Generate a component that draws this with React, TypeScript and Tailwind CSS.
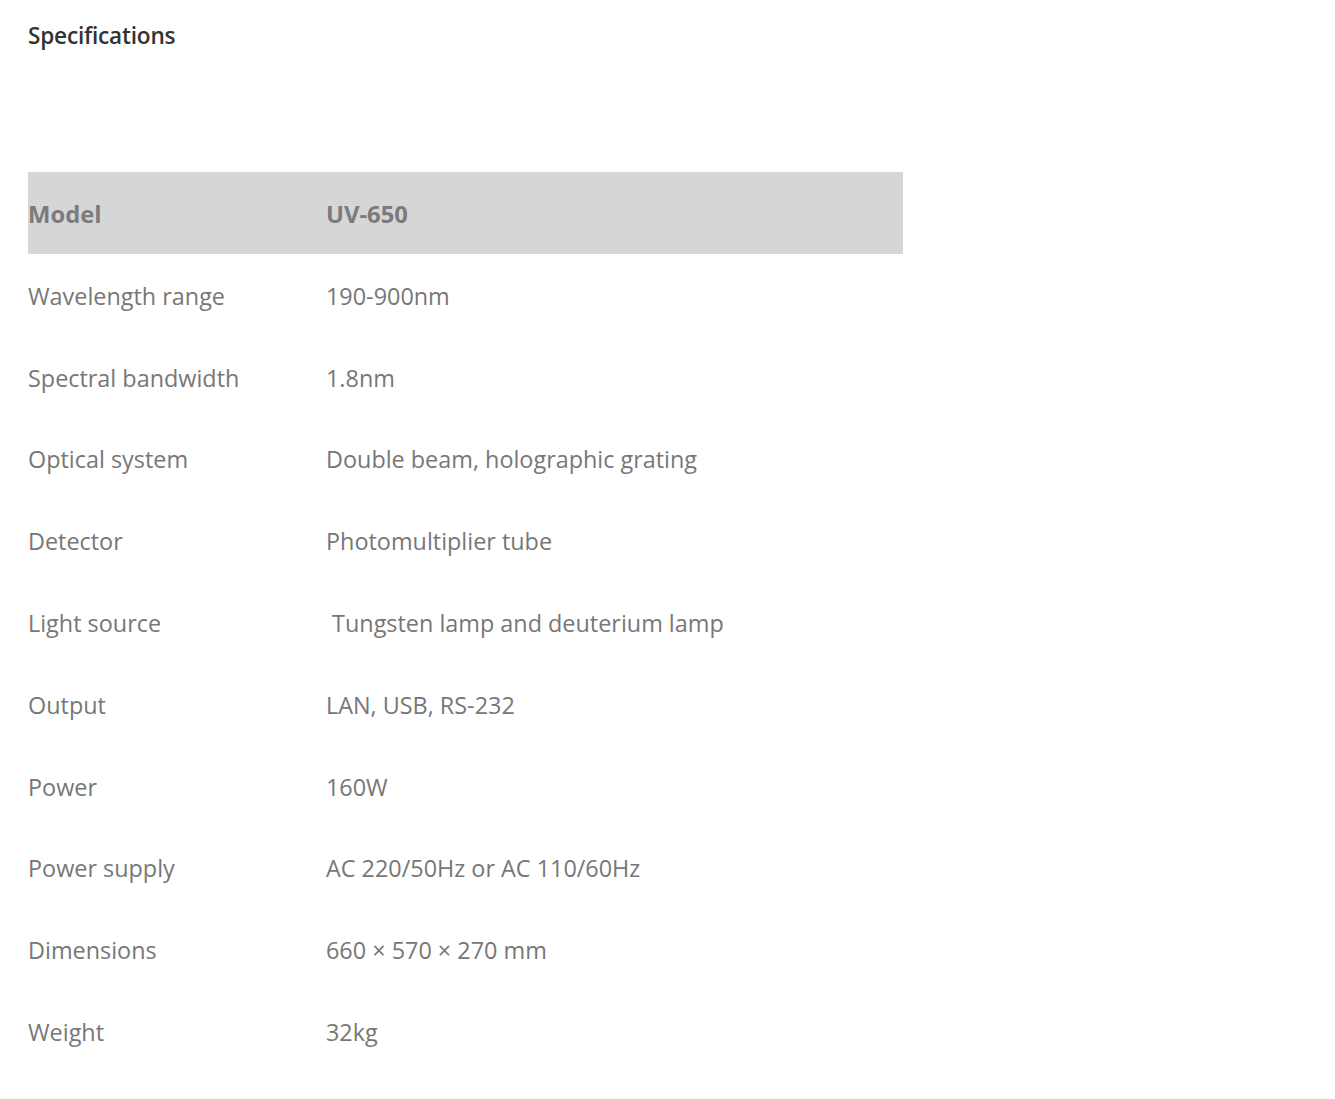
import React from "react";

type Spec = { label: string; value: string };

const specs: Spec[] = [
  { label: "Wavelength range", value: "190-900nm" },
  { label: "Spectral bandwidth", value: "1.8nm" },
  { label: "Optical system", value: "Double beam, holographic grating" },
  { label: "Detector", value: "Photomultiplier tube" },
  { label: "Light source", value: "\u00a0Tungsten lamp and deuterium lamp" },
  { label: "Output", value: "LAN, USB, RS-232" },
  { label: "Power", value: "160W" },
  { label: "Power supply", value: "AC 220/50Hz or AC 110/60Hz" },
  { label: "Dimensions", value: "660 × 570 × 270 mm" },
  { label: "Weight", value: "32kg" },
];

export default function App() {
  return (
    <div
      className="min-h-screen bg-white px-[28px] pt-[21px]"
      style={{ fontFamily: '"Open Sans", "Noto Sans", sans-serif' }}
    >
      {/* 제목 */}
      <h2 className="text-[22.6px] font-semibold leading-[30px] tracking-[-0.2px] text-[#333]">
        Specifications
      </h2>

      {/* 표 */}
      <div className="mt-[121px] w-[875px] text-[23.4px] text-[#777]">
        <div className="grid h-[82px] grid-cols-[298px_1fr] items-center bg-[#d6d6d6] pt-[3px] text-[23.8px] font-bold text-[#7b7b7b]">
          <div>Model</div>
          <div>UV-650</div>
        </div>
        {specs.map((s) => (
          <div
            key={s.label}
            className="grid h-[81.8px] grid-cols-[298px_1fr] items-center pt-[3px]"
          >
            <div>{s.label}</div>
            <div className="whitespace-pre">{s.value}</div>
          </div>
        ))}
      </div>
    </div>
  );
}
